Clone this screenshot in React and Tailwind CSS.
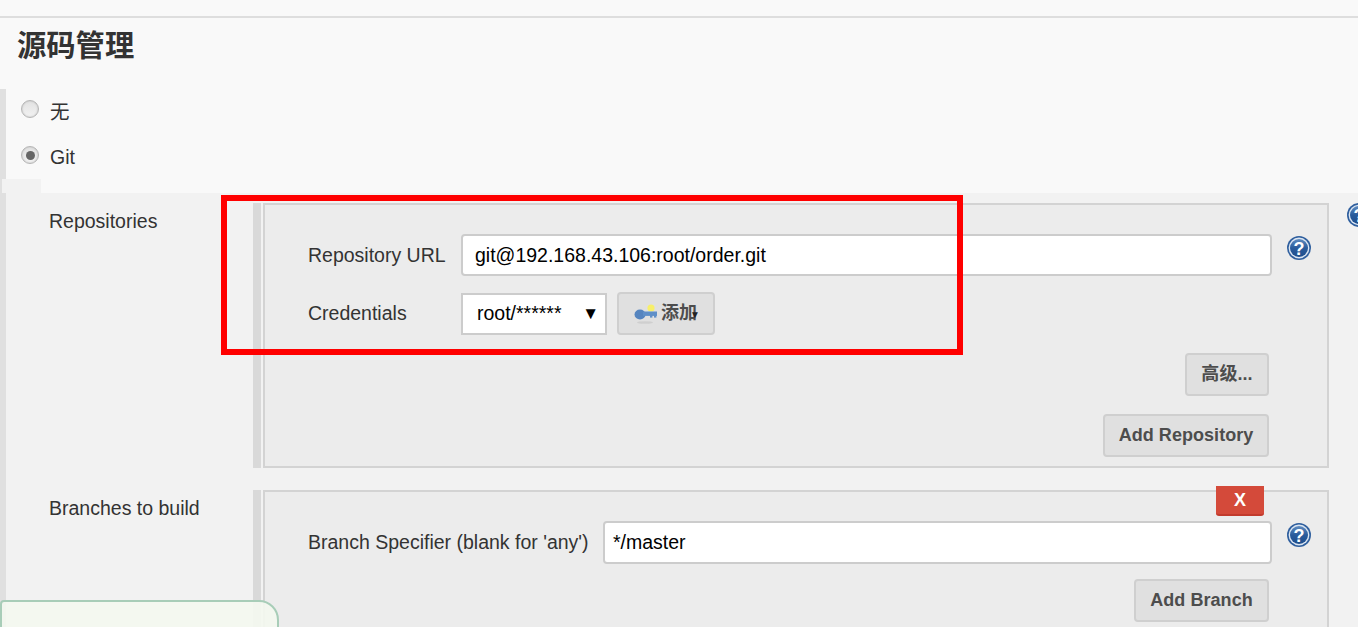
const helpId = { n: 0 };

function Help({ className = "" }) {
  const id = `hg${helpId.n++}`;
  return (
    <svg viewBox="0 0 24 24" className={`w-6 h-6 shrink-0 ${className}`}>
      <defs>
        <linearGradient id={id} x1="0" y1="0" x2="0" y2="1">
          <stop offset="0" stopColor="#5f8cc0" />
          <stop offset="0.5" stopColor="#2a5c9c" />
          <stop offset="1" stopColor="#1e4d8c" />
        </linearGradient>
      </defs>
      <circle cx="12" cy="12" r="12" fill="#2f5f9e" />
      <circle cx="12" cy="12" r="10.4" fill="#dbe5f1" />
      <circle cx="12" cy="12" r="9" fill={`url(#${id})`} />
      <text x="12" y="18.5" textAnchor="middle" fontSize="18" fontWeight="700" fill="#fff" fontFamily="Liberation Sans, sans-serif">?</text>
    </svg>
  );
}

function KeyIcon() {
  return (
    <svg viewBox="0 0 24 20" className="w-6 h-5 shrink-0">
      <ellipse cx="11" cy="18.5" rx="8" ry="1.3" fill="#cfcfcf" />
      <circle cx="17" cy="4" r="3.6" fill="#f7ef6a" />
      <ellipse cx="6" cy="10.5" rx="5.5" ry="5" fill="#5685bf" />
      <rect x="9" y="7.5" width="14" height="4.4" fill="#5f8fc8" />
      <rect x="16" y="11" width="2.4" height="2.6" fill="#5f8fc8" />
      <rect x="20" y="11" width="2.4" height="2.6" fill="#5f8fc8" />
    </svg>
  );
}

function Radio({ checked, className = "" }) {
  return (
    <span className={`w-[18px] h-[18px] rounded-full border border-[#b5b5b5] bg-gradient-to-b from-[#e2e2e2] to-[#f2f2f2] flex items-center justify-center shrink-0 shadow-[inset_0_0_2px_#bbb] ${className}`}>
      {checked && <span className="w-[9px] h-[9px] rounded-full bg-[#666]" />}
    </span>
  );
}

function Btn({ children, className = "" }) {
  return (
    <button className={`h-[43px] rounded-[4px] border-2 border-[#cfcfcf] bg-[#e0e0e0] text-[#4d4d4d] font-bold text-[18px] tracking-[0.05px] flex items-center justify-center ${className}`}>
      {children}
    </button>
  );
}

function Panel({ children, className = "" }) {
  return (
    <div className={`flex ml-[247px] ${className}`}>
      <div className="w-2 bg-[#d9d9d9] mr-0.5 shrink-0" />
      <div className="relative w-[1066px] border-2 border-[#d3d3d3] bg-[#ececec] pl-[43px] pr-[58px] shrink-0">
        {children}
      </div>
    </div>
  );
}

export default function App() {
  return (
    <div className="relative w-[1358px] h-[627px] overflow-hidden bg-[#f9f9f9] text-[#333] text-[19.5px] font-['Liberation_Sans','Noto_Sans_CJK_SC',sans-serif]">
      <div className="h-[18px] border-b-2 border-[#dedede]" />
      <h2 className="h-[71px] pl-[17px] pt-[8px] text-[29.3px] leading-[40px] font-bold text-[#333]">源码管理</h2>

      <div className="flex">
        <div className="w-1.5 bg-[#e0e0e0] shrink-0" />
        <div className="flex-1 min-w-0">
          <label className="h-[44px] flex items-center pl-[15px] gap-[11px]">
            <Radio className="-mt-[4px]" />
            <span className="pt-[4px]">无</span>
          </label>
          <label className="h-[46px] flex items-center pl-[15px] gap-[11px]">
            <Radio checked className="-mt-[2px]" />
            <span className="pt-[3px]">Git</span>
          </label>
          <div className="h-[14px] w-[39px] -ml-1 bg-[#f2f2f2]" />
          <div className="h-[500px] bg-[#f2f2f2] pt-[10px] relative -ml-1.5 pl-1.5">
            <div className="absolute left-0 top-0 bottom-0 w-1.5 bg-[#e0e0e0]" />
            <div className="absolute left-[49px] top-[14px]">Repositories</div>
            <div className="absolute left-[49px] top-[301px]">Branches to build</div>
            <Panel className="h-[265px]">
              <div className="flex items-center pt-[29px]">
                <span className="w-[153px] shrink-0 pt-[2px]">Repository URL</span>
                <div className="w-[811px] h-[42px] shrink-0 rounded-[4px] border-2 border-[#ccc] bg-white text-black pl-3 flex items-center pt-[2px]">git@192.168.43.106:root/order.git</div>
                <Help className="ml-[15px] -mt-[14px]" />
              </div>
              <div className="flex items-center mt-4">
                <span className="w-[153px] shrink-0">Credentials</span>
                <div className="w-[146px] h-[42px] border-2 border-[#ccc] bg-white text-black pl-[14px] pr-[6px] flex items-center justify-between">
                  <span>root/******</span>
                  <span className="text-[17px]">▼</span>
                </div>
                <button className="relative ml-2.5 w-[98px] h-[43px] rounded-[4px] border-2 border-[#cfcfcf] bg-[#e0e0e0] text-[#4d4d4d] font-bold text-[18px] flex items-center pl-[15px] gap-[3px]">
                  <KeyIcon />
                  <span>添加</span>
                  <span className="absolute left-[71px] top-[13px] text-[10px] text-[#222]">▼</span>
                </button>
              </div>
              <div className="flex flex-col items-end gap-[18px] mt-[18px]">
                <Btn className="w-[84px]">高级...</Btn>
                <Btn className="w-[166px]">Add Repository</Btn>
              </div>
            </Panel>
            <Panel className="h-[200px] mt-[22px]">
              <div className="absolute left-[951px] -top-[6px] w-[48px] h-[30px] bg-[#d44a3a] border-b-2 border-[#c23b2d] rounded-b-[3px] text-white font-bold text-[18px] flex items-center justify-center">X</div>
              <div className="flex items-center pt-[29px]">
                <span className="w-[295px] shrink-0">Branch Specifier (blank for 'any')</span>
                <div className="w-[669px] h-[43px] shrink-0 rounded-[4px] border-2 border-[#ccc] bg-white text-black pl-2 flex items-center">*/master</div>
                <Help className="ml-[15px] -mt-[15px]" />
              </div>
              <div className="flex justify-end mt-[15px]">
                <Btn className="w-[135px]">Add Branch</Btn>
              </div>
            </Panel>
            <div className="absolute left-[1347px] top-[10px]"><Help /></div>
          </div>
        </div>
      </div>

      <div className="absolute left-[221px] top-[195px] w-[742px] h-[160px] border-[6px] border-[#ff0000]" />
      <div className="absolute left-0 top-[600px] w-[279px] h-[40px] border-2 border-[#a8cdb8] rounded-tr-[20px] rounded-tl-[4px] bg-[#f4f8ef]/90" />
    </div>
  );
}
